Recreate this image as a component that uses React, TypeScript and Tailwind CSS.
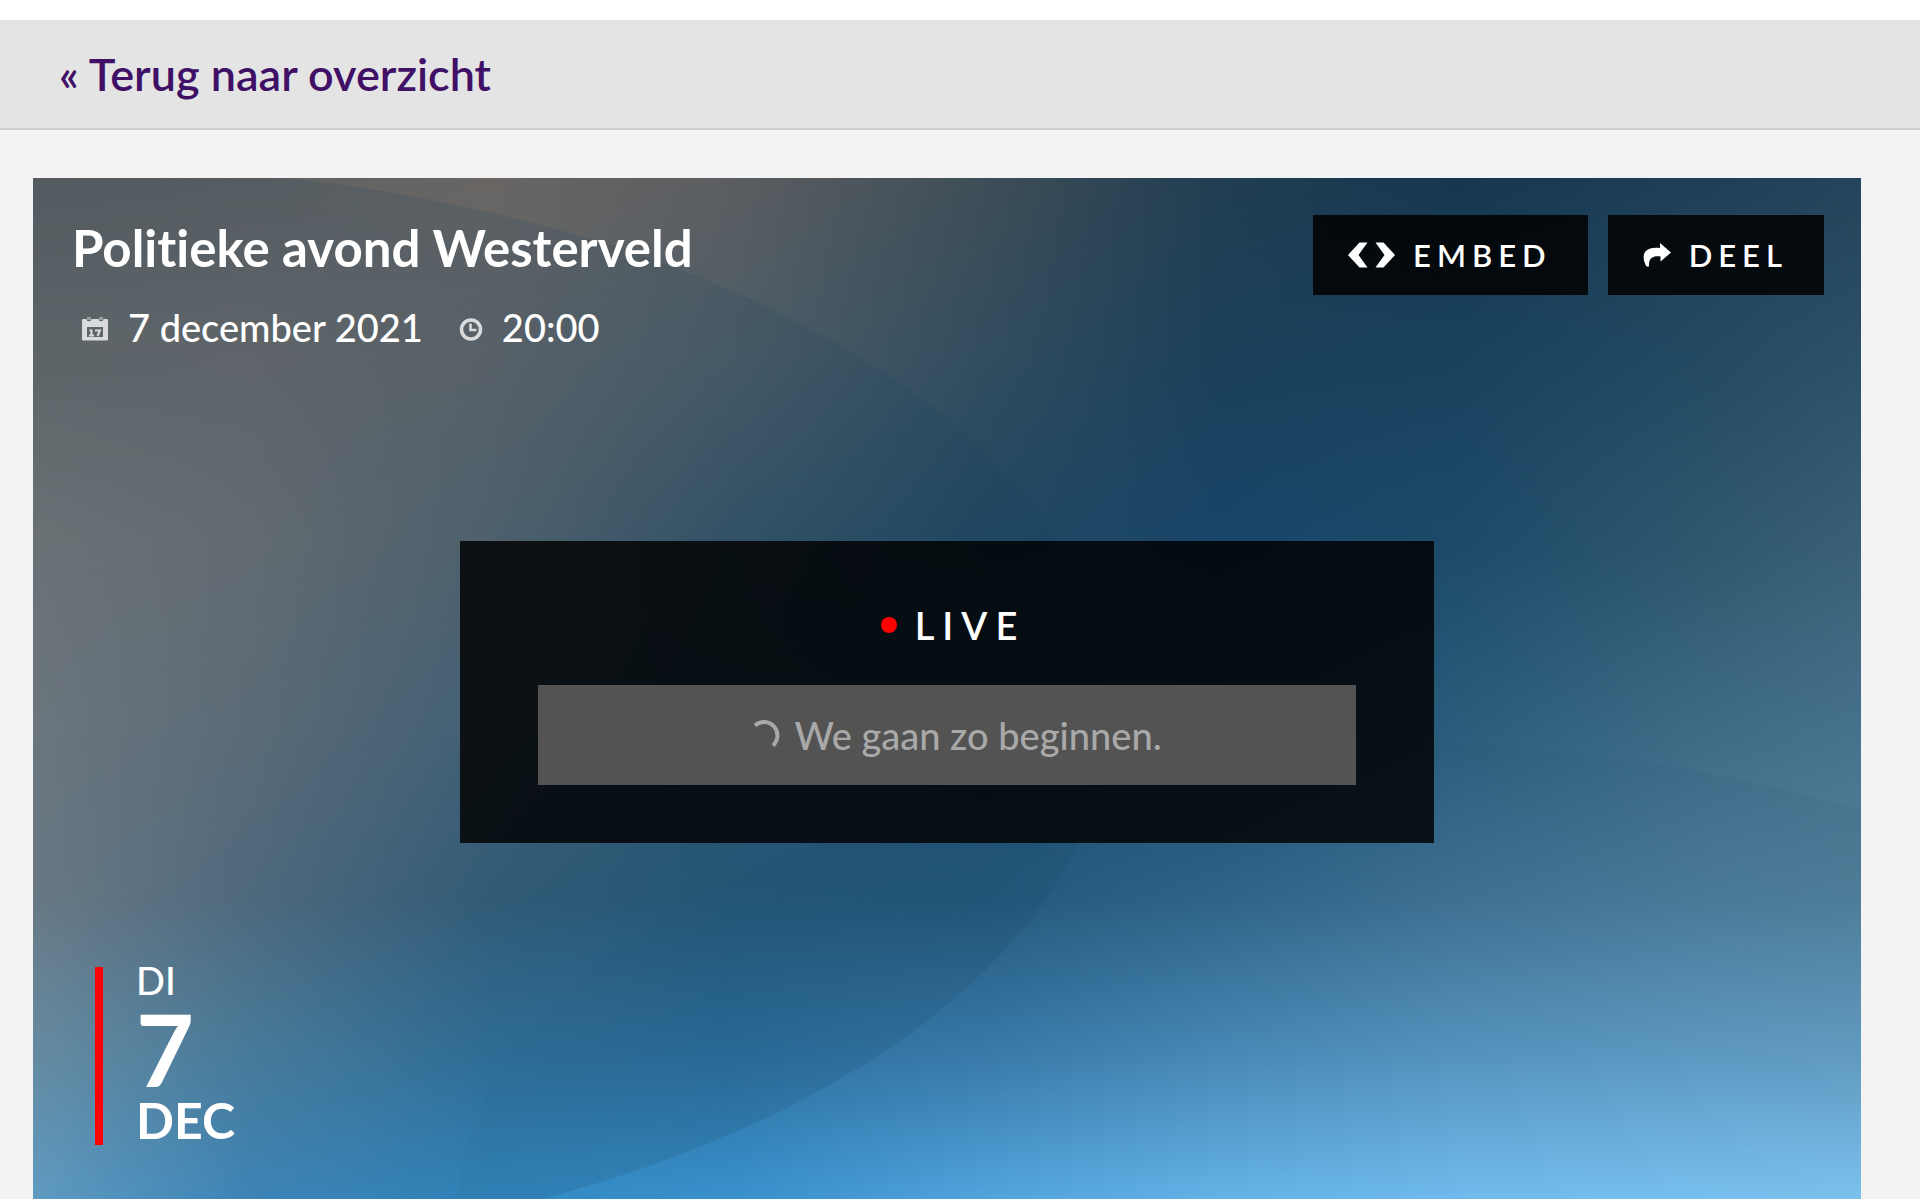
const columns = [0, 12, 25, 38, 52, 65, 78, 92, 100]

// Colours of the backdrop, one row per height, left to right.
const rows: { y: number; colors: string[] }[] = [
  { y: 0, colors: ['#5e6061', '#606263', '#696664', '#5c5e61', '#3f4e58', '#213e52', '#173750', '#1f4057', '#24455b'] },
  { y: 18, colors: ['#6a6c6c', '#6c6c6d', '#63676b', '#4e5e69', '#314d5f', '#1b405a', '#19425e', '#254b64', '#2d5167'] },
  { y: 36, colors: ['#797b7b', '#6f7275', '#576671', '#375568', '#214862', '#19456a', '#1e4b6a', '#30586f', '#3a6078'] },
  { y: 54, colors: ['#7a7f84', '#66727c', '#48657a', '#2c5974', '#215174', '#1e4f73', '#2b5e7c', '#406c86', '#47728c'] },
  { y: 70, colors: ['#77838c', '#587083', '#37607b', '#275a7a', '#255a7d', '#30668a', '#427395', '#4f7e9c', '#53829d'] },
  { y: 85, colors: ['#7397ad', '#5084a4', '#34749e', '#2d71a1', '#3a7cac', '#4b8cba', '#5998c3', '#639fc8', '#67a1c8'] },
  { y: 100, colors: ['#6babd4', '#4390c7', '#348ec9', '#3b96d4', '#56abe6', '#6abcf2', '#78c6fa', '#81ccfc', '#85cefd'] },
]

function Backdrop() {
  return (
    <svg className="absolute inset-0 size-full" viewBox="0 0 1828 1028" preserveAspectRatio="none" aria-hidden="true">
      <defs>
        {rows.map((row, i) => (
          <linearGradient key={row.y} id={`tone${i}`}>
            {columns.map((x, c) => (
              <stop key={x} offset={`${x}%`} stopColor={row.colors[c]} />
            ))}
          </linearGradient>
        ))}
        {rows.slice(1).map((row, i) => (
          <linearGradient key={row.y} id={`fade${i + 1}`} x1="0" x2="0" y1="0" y2="1">
            <stop offset={`${rows[i].y}%`} stopColor="#000" />
            <stop offset={`${row.y}%`} stopColor="#fff" />
          </linearGradient>
        ))}
        {rows.slice(1).map((row, i) => (
          <mask key={row.y} id={`mask${i + 1}`} maskUnits="userSpaceOnUse" x="0" y="0" width="1828" height="1028">
            <rect width="1828" height="1028" fill={`url(#fade${i + 1})`} />
          </mask>
        ))}
        <linearGradient id="arc">
          <stop offset="0%" stopColor="#1b4a66" stopOpacity="0.04" />
          <stop offset="50%" stopColor="#1b4a66" stopOpacity="0.07" />
          <stop offset="100%" stopColor="#1b4a66" stopOpacity="0.1" />
        </linearGradient>
      </defs>
      {rows.map((row, i) => (
        <rect key={row.y} width="1828" height="1028" fill={`url(#tone${i})`} mask={i ? `url(#mask${i})` : undefined} />
      ))}
      <ellipse cx="46" cy="534" rx="1029" ry="545" fill="#17435f" opacity="0.14" />
      <ellipse cx="1350" cy="1035" rx="926" ry="470" fill="url(#arc)" />
    </svg>
  )
}

function CodeIcon() {
  return (
    <svg className="h-[26px] w-[47px]" viewBox="0 0 47 26" fill="currentColor" aria-hidden="true">
      <path d="M11.5 0.500h8L10.500 13l9 12.500h-8L0 13z M27.500 0.500h8L47 13l-11.500 12.500h-8L36.500 13z" />
    </svg>
  )
}

function ShareIcon() {
  return (
    <svg className="h-6 w-7" viewBox="0 0 28 24" fill="currentColor" aria-hidden="true">
      <path d="M17 0 28 9.500 17.500 18.500V13.500C10 12.500 5.500 15 6 23.500H3.500C0 18 0 12 2 9 5 5 10 4.500 17 5z" />
    </svg>
  )
}

function CalendarIcon() {
  return (
    <svg className="mt-1 h-6 w-7" viewBox="0 0 28 24" aria-hidden="true">
      <path
        d="M1 3.500C1 2.500 1.500 2 2.500 2H5.500C5.500 5 10.500 5 10.500 2H17.500C17.500 5 22.500 5 22.500 2H25.500C26.500 2 27 2.500 27 3.500V22c0 1-.5 1.500-1.500 1.500h-23C1.500 23.500 1 23 1 22z M6 10v10h16V10z"
        fill="#d9dadb"
        fillRule="evenodd"
      />
      <path d="M7 0v3M9 0v3M19 0v3M21 0v3" stroke="#d9dadb" strokeWidth="1" />
      <path d="M8.500 13.500h2v5M8 18.500h5M14 13.500h5l-2.500 5.500" fill="none" stroke="#d9dadb" strokeWidth="2" />
    </svg>
  )
}

function ClockIcon() {
  return (
    <svg className="mt-1 size-6" viewBox="0 0 24 24" fill="none" stroke="#d9dadb" aria-hidden="true">
      <circle cx="12" cy="12.500" r="9.500" strokeWidth="3.500" />
      <path d="M11.500 6.500v6.500h6" strokeWidth="2.500" />
    </svg>
  )
}

function SpinnerIcon() {
  return (
    <svg className="size-8" viewBox="0 0 32 32" fill="none" stroke="currentColor" strokeWidth="4" aria-hidden="true">
      <path d="M7 6.500A13 13 0 0 1 25 26.500" />
    </svg>
  )
}

export default function App() {
  return (
    <div className="h-screen overflow-hidden bg-[#f3f3f3] font-['Lato',sans-serif] [font-variant-ligatures:none]">
      <header className="border-t-[20px] border-b-2 border-t-white border-b-[#cdcdcd] bg-[#e4e4e4] px-[59px] py-[26px]">
        <a href="#overzicht" className="block text-[45px] leading-[56px] font-semibold text-[#3f1065]">
          « Terug naar overzicht
        </a>
      </header>
      <main className="pt-12 pr-[59px] pl-[33px]">
        <section className="relative grid aspect-video grid-rows-[1fr_auto_1fr] overflow-hidden font-medium text-white">
          <Backdrop />
          <div className="relative flex items-start justify-between pt-[37px] pr-[37px] pl-[39px]">
            <div>
              <h1 className="text-[51px] leading-[66px] font-bold">Politieke avond Westerveld</h1>
              <div className="flex items-center gap-9 pt-4 pl-[9px] text-[38px] leading-[60px]">
                <span className="flex items-center gap-[19px]">
                  <CalendarIcon />
                  <time dateTime="2021-12-07">7 december 2021</time>
                </span>
                <span className="flex items-center gap-[19px]">
                  <ClockIcon />
                  <time dateTime="20:00">20:00</time>
                </span>
              </div>
            </div>
            <div className="flex gap-5 text-[31px] font-semibold tracking-[6px]">
              <button type="button" className="flex h-20 items-center gap-[18px] bg-black/85 pr-9 pl-[35px]">
                <CodeIcon />
                EMBED
              </button>
              <button type="button" className="flex h-20 items-center gap-[18px] bg-black/85 pr-9 pl-[35px]">
                <ShareIcon />
                DEEL
              </button>
            </div>
          </div>
          <div className="relative mx-auto w-8/15 bg-black/82 px-[78px] pt-[54px] pb-[58px] text-center">
            <p className="flex items-center justify-center gap-[18px] pb-[30px] pl-3 text-[38px] leading-[60px] font-semibold tracking-[8px]">
              <span className="size-4 rounded-full bg-[#ff0000]" />
              LIVE
            </p>
            <p className="flex h-[100px] items-center justify-center gap-[14px] bg-[#535353] pl-4 text-[38px] text-[#a9a9a9]">
              <SpinnerIcon />
              We gaan zo beginnen.
            </p>
          </div>
          <div className="relative flex items-end pb-[61px] pl-[62px]">
            <div className="flex h-[178px] flex-col border-l-8 border-[#ff0000] pl-[33px]">
              <span className="text-[38px] leading-[26px]">DI</span>
              <span className="text-[100px] leading-[110px] font-bold">7</span>
              <span className="text-[50px] leading-[34px] font-bold">DEC</span>
            </div>
          </div>
        </section>
      </main>
    </div>
  )
}
